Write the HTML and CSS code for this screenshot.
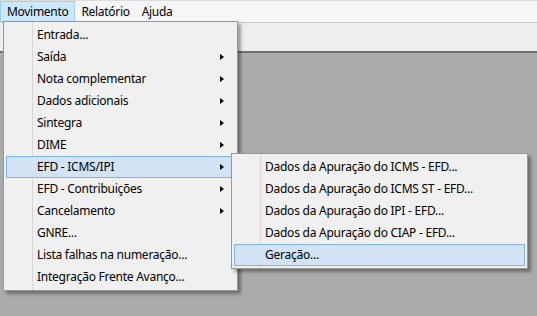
FILE: index.html
```html
<!DOCTYPE html>
<html lang="pt-BR">
<head>
    <meta charset="UTF-8">
    <title>Movimento</title>
    <link rel="stylesheet" href="styles.css">
</head>
<body>
    <div class="menubar">
        <span class="top-item active">Movimento</span>
        <span class="top-item">Relatório</span>
        <span class="top-item">Ajuda</span>
    </div>
    <div class="toolbar"></div>
    <div class="workspace"></div>

    <ul class="menu main-menu">
        <li class="item"><span>Entrada...</span></li>
        <li class="item sub"><span>Saída</span></li>
        <li class="item sub"><span>Nota complementar</span></li>
        <li class="item sub"><span>Dados adicionais</span></li>
        <li class="item sub"><span>Sintegra</span></li>
        <li class="item sub"><span>DIME</span></li>
        <li class="item sub selected"><span>EFD - ICMS/IPI</span></li>
        <li class="item sub"><span>EFD - Contribuições</span></li>
        <li class="item sub"><span>Cancelamento</span></li>
        <li class="item"><span>GNRE...</span></li>
        <li class="item"><span>Lista falhas na numeração...</span></li>
        <li class="item"><span>Integração Frente Avanço...</span></li>
    </ul>

    <ul class="menu sub-menu">
        <li class="item"><span>Dados da Apuração do ICMS - EFD...</span></li>
        <li class="item"><span>Dados da Apuração do ICMS ST - EFD...</span></li>
        <li class="item"><span>Dados da Apuração do IPI - EFD...</span></li>
        <li class="item"><span>Dados da Apuração do CIAP - EFD...</span></li>
        <li class="item selected"><span>Geração...</span></li>
    </ul>
</body>
</html>
```

FILE: styles.css
```css
body {
    margin: 0;
    width: 537px;
    height: 316px;
    overflow: hidden;
    font-family: "Segoe UI", "Noto Sans", "Open Sans", sans-serif;
    font-size: 12px;
    color: #000;
    background-color: #ababab;
    position: relative;
}

.menubar {
    height: 21px;
    border-top: 1px solid #dcdcdc;
    background-color: #f5f6f7;
    display: flex;
}

.top-item {
    padding: 0 5px;
    line-height: 19px;
    border: 1px solid transparent;
    letter-spacing: -0.3px;
}

.top-item.active {
    background-color: #cce8ff;
    border-color: #99d1ff;
    padding: 0 6px;
}

.toolbar {
    height: 28px;
    background-color: #eeeeee;
    border-top: 1px solid #c8c8c8;
    border-bottom: 2px solid #6f6f6f;
}

.workspace {
    height: 264px;
}

.menu {
    list-style: none;
    margin: 0;
    padding: 2px;
    position: absolute;
    background-color: #f0f0f0;
    border: 1px solid #979797;
    box-shadow: 3px 3px 3px rgba(0, 0, 0, 0.35);
    background-image: linear-gradient(#d7d7d7, #d7d7d7);
    background-repeat: no-repeat;
    background-size: 1px 100%;
}

.main-menu {
    left: 3px;
    top: 21px;
    width: 229px;
    background-position: 28px 0;
}

.sub-menu {
    left: 231px;
    top: 153px;
    width: 291px;
    background-position: 28px 0;
}

.item {
    height: 22px;
    line-height: 20px;
    padding-left: 30px;
    border: 1px solid transparent;
    position: relative;
    box-sizing: border-box;
    white-space: nowrap;
    letter-spacing: -0.25px;
}

.item.sub::after {
    content: "";
    position: absolute;
    right: 10px;
    top: 7px;
    border-left: 4px solid #000;
    border-top: 3.5px solid transparent;
    border-bottom: 3.5px solid transparent;
}

.item.selected {
    background-color: #d1e3f4;
    border-color: #7fb5eb;
}
```
